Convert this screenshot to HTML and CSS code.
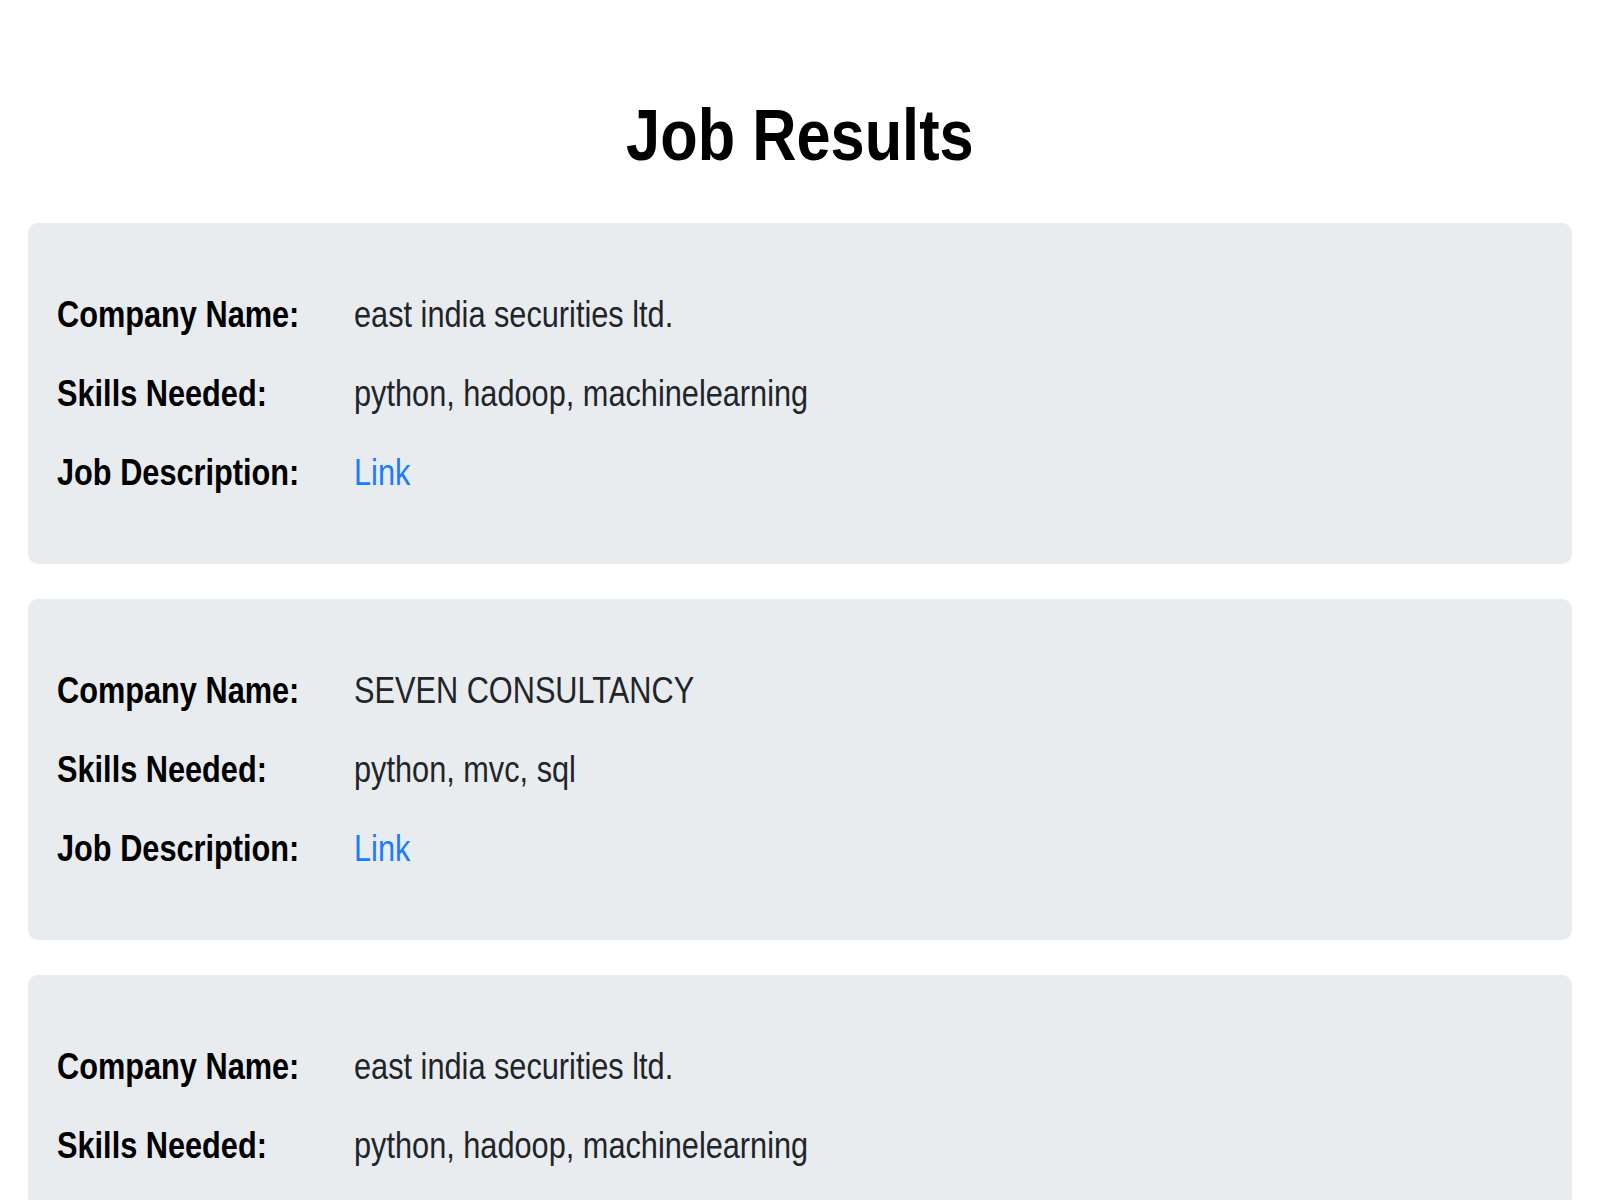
FILE: index.html
```html
<!DOCTYPE html>
<html lang="en">
<head>
<meta charset="utf-8">
<title>Job Results</title>
<link rel="stylesheet" href="styles.css">
</head>
<body>
<main class="page">
  <h1 class="title"><span class="title-text">Job Results</span></h1>
  <section class="job-list">
    <article class="job-card">
      <div class="row"><span class="label">Company Name:</span><span class="value">east india securities ltd.</span></div>
      <div class="row"><span class="label">Skills Needed:</span><span class="value">python, hadoop, machinelearning</span></div>
      <div class="row"><span class="label">Job Description:</span><span class="value"><a class="link" href="#">Link</a></span></div>
    </article>
    <article class="job-card">
      <div class="row"><span class="label">Company Name:</span><span class="value">SEVEN CONSULTANCY</span></div>
      <div class="row"><span class="label">Skills Needed:</span><span class="value">python, mvc, sql</span></div>
      <div class="row"><span class="label">Job Description:</span><span class="value"><a class="link" href="#">Link</a></span></div>
    </article>
    <article class="job-card">
      <div class="row"><span class="label">Company Name:</span><span class="value">east india securities ltd.</span></div>
      <div class="row"><span class="label">Skills Needed:</span><span class="value">python, hadoop, machinelearning</span></div>
      <div class="row"><span class="label">Job Description:</span><span class="value"><a class="link" href="#">Link</a></span></div>
    </article>
  </section>
</main>
</body>
</html>
```

FILE: styles.css
```css
html, body {
  margin: 0;
  padding: 0;
  background: #ffffff;
}

body {
  font-family: "Liberation Sans", Arial, sans-serif;
  color: #212529;
}

.page {
  padding: 0 28px;
}

.title {
  margin: 95px 0 48px;
  font-size: 73px;
  line-height: 80px;
  font-weight: 700;
  text-align: center;
  color: #000000;
}

.title-text {
  display: inline-block;
  transform: scaleX(0.84);
  transform-origin: center;
}

.job-list {
  display: flex;
  flex-direction: column;
  gap: 35px;
}

.job-card {
  background: #e9ecef;
  border-radius: 10px;
  padding: 52px 29px;
}

.row {
  display: grid;
  grid-template-columns: 297px 1fr;
  font-size: 37px;
  line-height: 79px;
}

.label,
.value {
  justify-self: start;
  white-space: nowrap;
  transform: scaleX(0.83);
  transform-origin: left center;
}

.label {
  font-weight: 700;
  color: #000000;
}

.value {
  color: #212529;
}

.link {
  color: #1a7cff;
  text-decoration: none;
}
```
